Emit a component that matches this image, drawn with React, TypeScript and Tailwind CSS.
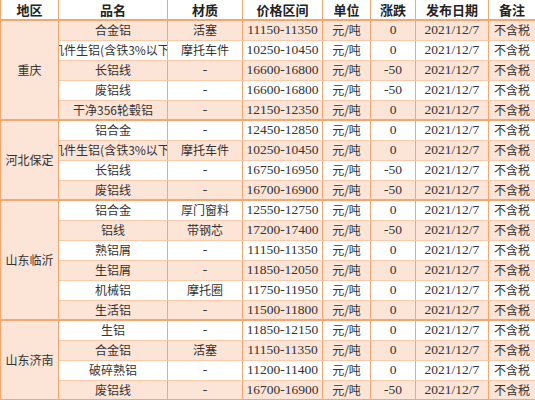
import clsx from 'clsx'

type Row = { name: string; mat: string; price: string; chg: string }

const groups: { region: string; rows: Row[] }[] = [
  {
    region: '重庆',
    rows: [
      { name: '合金铝', mat: '活塞', price: '11150-11350', chg: '0' },
      { name: '机件生铝(含铁3%以下)', mat: '摩托车件', price: '10250-10450', chg: '0' },
      { name: '长铝线', mat: '-', price: '16600-16800', chg: '-50' },
      { name: '废铝线', mat: '-', price: '16600-16800', chg: '-50' },
      { name: '干净356轮毂铝', mat: '-', price: '12150-12350', chg: '0' },
    ],
  },
  {
    region: '河北保定',
    rows: [
      { name: '铝合金', mat: '-', price: '12450-12850', chg: '0' },
      { name: '机件生铝(含铁3%以下)', mat: '摩托车件', price: '10250-10450', chg: '0' },
      { name: '长铝线', mat: '-', price: '16750-16950', chg: '-50' },
      { name: '废铝线', mat: '-', price: '16700-16900', chg: '-50' },
    ],
  },
  {
    region: '山东临沂',
    rows: [
      { name: '铝合金', mat: '厚门窗料', price: '12550-12750', chg: '0' },
      { name: '铝线', mat: '带钢芯', price: '17200-17400', chg: '-50' },
      { name: '熟铝屑', mat: '-', price: '11150-11350', chg: '0' },
      { name: '生铝屑', mat: '-', price: '11850-12050', chg: '0' },
      { name: '机械铝', mat: '摩托圈', price: '11750-11950', chg: '0' },
      { name: '生活铝', mat: '-', price: '11500-11800', chg: '0' },
    ],
  },
  {
    region: '山东济南',
    rows: [
      { name: '生铝', mat: '-', price: '11850-12150', chg: '0' },
      { name: '合金铝', mat: '活塞', price: '11150-11350', chg: '0' },
      { name: '破碎熟铝', mat: '-', price: '11200-11400', chg: '0' },
      { name: '废铝线', mat: '-', price: '16700-16900', chg: '-50' },
    ],
  },
]

const headers = ['地区', '品名', '材质', '价格区间', '单位', '涨跌', '发布日期', '备注']
const widths = [58, 109, 75, 80, 48, 45, 73, 47]

const num = "font-['Liberation_Serif','Noto_Sans_CJK_SC',serif] text-[13.5px]"
const cjk = "font-['Noto_Sans_CJK_SC',sans-serif] text-[12px]"

function Cell({ children, className, last }: { children: React.ReactNode; className?: string; last: boolean }) {
  return (
    <td
      className={clsx(
        'p-0 h-[20px] border-r border-r-[#f4a870] text-center align-middle',
        last ? 'border-b-2 border-b-[#f4a870]' : 'border-b border-b-[#f8cbad]',
        className
      )}
    >
      {/* centred overflow, clipped on both sides like a spreadsheet cell */}
      <div className="flex justify-center items-center overflow-hidden whitespace-nowrap leading-[18px]">
        <span>{children}</span>
      </div>
    </td>
  )
}

export default function App() {
  let idx = 0
  return (
    <div className="w-[535px] h-[400px] overflow-hidden bg-white text-[#333]">
      <table className="table-fixed border-collapse w-[535px]">
        <colgroup>
          {widths.map((w, i) => (
            <col key={i} style={{ width: w }} />
          ))}
        </colgroup>
        <thead>
          <tr>
            {headers.map((h, i) => (
              <th
                key={h}
                className={clsx(
                  "p-0 h-[20px] font-bold text-[13px] font-['Noto_Sans_CJK_SC',sans-serif] leading-[18px] border-r border-r-[#f4a870] border-b-2 border-b-[#f4a870] text-[#222]",
                  i === 0 && 'border-l border-l-[#f4a870]'
                )}
              >
                {h}
              </th>
            ))}
          </tr>
        </thead>
        <tbody>
          {groups.map((g) =>
            g.rows.map((r, j) => {
              idx++
              const shaded = idx % 2 === 1
              const last = j === g.rows.length - 1
              return (
                <tr key={g.region + j} className={shaded ? 'bg-[#fce4d6]' : 'bg-white'}>
                  {j === 0 && (
                    <td
                      rowSpan={g.rows.length}
                      className={clsx(
                        cjk,
                        'p-0 bg-[#fce4d6] text-center align-middle border-l border-l-[#f4a870] border-r border-r-[#f4a870] border-b-2 border-b-[#f4a870]'
                      )}
                    >
                      {g.region}
                    </td>
                  )}
                  <Cell className={cjk} last={last}>{r.name}</Cell>
                  <Cell className={r.mat === '-' ? num : cjk} last={last}>{r.mat}</Cell>
                  <Cell className={num} last={last}>{r.price}</Cell>
                  <Cell className={cjk} last={last}>元/吨</Cell>
                  <Cell className={num} last={last}>{r.chg}</Cell>
                  <Cell className={num} last={last}>2021/12/7</Cell>
                  <Cell className={cjk} last={last}>不含税</Cell>
                </tr>
              )
            })
          )}
        </tbody>
      </table>
    </div>
  )
}
